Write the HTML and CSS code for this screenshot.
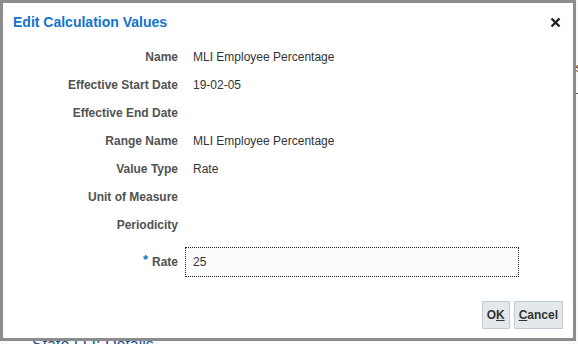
FILE: index.html
```html
<!DOCTYPE html>
<html lang="en">

<head>
    <meta charset="UTF-8">
    <meta name="viewport" content="width=device-width, initial-scale=1.0">
    <title>Edit Calculation Values</title>
    <link rel="stylesheet" href="styles.css">
</head>

<body>
    <div class="page">
        <div class="page-bar">
            <span class="page-tab">s</span>
        </div>
        <h3 class="page-heading">State LLI: Details</h3>
    </div>

    <div class="dialog">
        <div class="dialog-header">
            <h1 class="dialog-title">Edit Calculation Values</h1>
            <button class="close" aria-label="Close">
                <svg width="11" height="11" viewBox="0 0 11 11">
                    <path d="M1.5 1.5 L9.5 9.5 M9.5 1.5 L1.5 9.5" stroke="#222" stroke-width="2.4" />
                </svg>
            </button>
        </div>

        <div class="form">
            <div class="label">Name</div>
            <div class="value">MLI Employee Percentage</div>

            <div class="label">Effective Start Date</div>
            <div class="value">19-02-05</div>

            <div class="label">Effective End Date</div>
            <div class="value"></div>

            <div class="label">Range Name</div>
            <div class="value">MLI Employee Percentage</div>

            <div class="label">Value Type</div>
            <div class="value">Rate</div>

            <div class="label">Unit of Measure</div>
            <div class="value"></div>

            <div class="label">Periodicity</div>
            <div class="value"></div>

            <div class="label label-input"><span class="required">*</span> Rate</div>
            <div class="value value-input">
                <input class="field" type="text" value="25">
            </div>
        </div>

        <div class="dialog-footer">
            <button class="btn">O<u>K</u></button>
            <button class="btn"><u>C</u>ancel</button>
        </div>
    </div>
</body>

</html>
```

FILE: styles.css
```css
* {
    margin: 0;
    padding: 0;
    box-sizing: border-box;
}

body {
    font-family: 'Liberation Sans', Arial, sans-serif;
    background-color: #fafafa;
    height: 344px;
    overflow: hidden;
    position: relative;
}

.page-bar {
    height: 94px;
    border-bottom: 1px solid #555;
    display: flex;
    justify-content: flex-end;
    padding-top: 60px;
}

.page-tab {
    font-size: 13px;
    color: #333;
    margin-right: -4px;
}

.page-heading {
    margin-top: 242px;
    margin-left: 32px;
    font-size: 16px;
    font-weight: normal;
    color: #1a4f8e;
}

.dialog {
    position: absolute;
    left: 0;
    top: 0;
    width: 576px;
    height: 341px;
    border: 3px solid #8c8c8c;
    background-color: #fff;
    display: flex;
    flex-direction: column;
}

.dialog-header {
    height: 40px;
    display: flex;
    align-items: center;
    justify-content: space-between;
    padding: 0 12px 2px 10px;
}

.dialog-title {
    font-size: 14px;
    font-weight: bold;
    color: #0f74cf;
}

.close {
    border: none;
    background: none;
    width: 11px;
    height: 11px;
    display: block;
}

.close svg {
    display: block;
}

.form {
    display: grid;
    grid-template-columns: 175px 334px;
    grid-auto-rows: 28px;
    column-gap: 7px;
    font-size: 12px;
}

.label {
    text-align: right;
    font-weight: bold;
    color: #525252;
    display: flex;
    align-items: center;
    justify-content: flex-end;
}

.value {
    color: #333;
    padding-left: 8px;
    display: flex;
    align-items: center;
}

.label-input,
.value-input {
    margin-top: 8px;
    height: 30px;
}

.required {
    color: #0f74cf;
    font-size: 13px;
    margin-right: 4px;
    align-self: flex-start;
    margin-top: 5px;
}

.value-input {
    padding-left: 0;
}

.field {
    width: 100%;
    height: 30px;
    border: 1px dotted #222;
    background-color: #fbfcfe;
    padding: 0 7px;
    font-family: inherit;
    font-size: 12px;
    color: #333;
    outline: none;
}

.dialog-footer {
    margin-top: auto;
    display: flex;
    justify-content: flex-end;
    gap: 4px;
    padding: 0 10px 9px 0;
}

.btn {
    height: 28px;
    padding: 0 4px;
    border: 1px solid #c3ccd5;
    background-color: #e4e8ec;
    font-family: inherit;
    font-size: 12px;
    font-weight: bold;
    color: #333;
}
```
